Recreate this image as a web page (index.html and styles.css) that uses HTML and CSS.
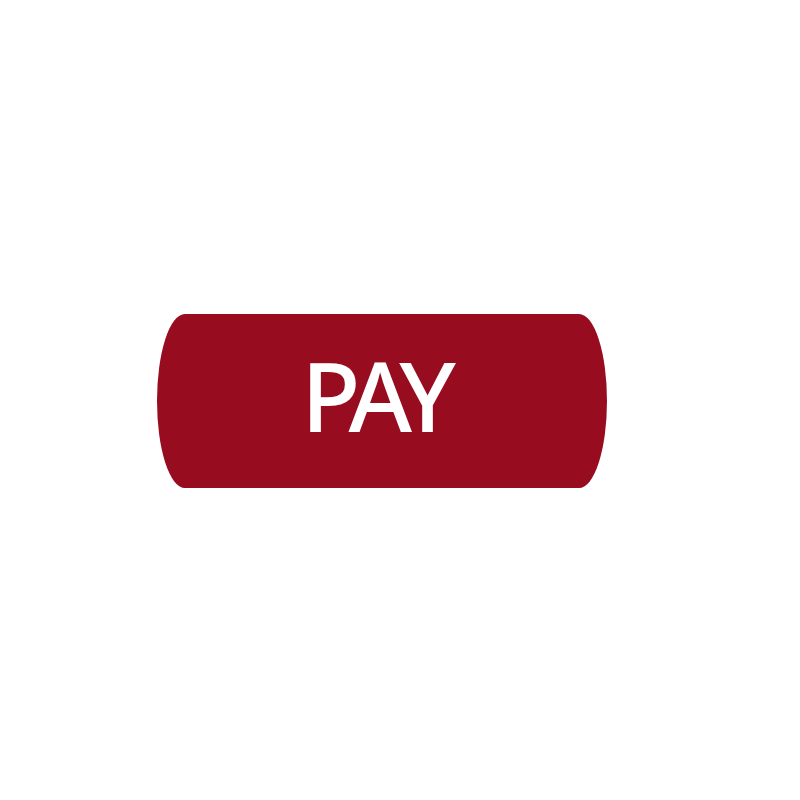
FILE: index.html
```html
<!DOCTYPE html>
<html>
<head>
<meta charset="utf-8">
<link rel="stylesheet" href="styles.css">
</head>
<body>
<main class="page">
  <button class="pay-btn" type="button">PAY</button>
</main>
</body>
</html>
```

FILE: styles.css
```css
html, body {
  margin: 0;
  padding: 0;
  background: #ffffff;
}
.page {
  width: 800px;
  height: 800px;
  box-sizing: border-box;
  padding: 314px 0 0 157px;
  display: flex;
  align-items: flex-start;
}
.pay-btn {
  width: 450px;
  height: 174px;
  border: none;
  margin: 0;
  padding: 0 14px 14px 0;
  background: #980c20;
  border-radius: 28px / 50%;
  color: #ffffff;
  font-family: "Noto Sans", "Open Sans", sans-serif;
  font-size: 97px;
  font-weight: 500;
  letter-spacing: -7px;
  line-height: 1;
  display: flex;
  align-items: center;
  justify-content: center;
}
```
